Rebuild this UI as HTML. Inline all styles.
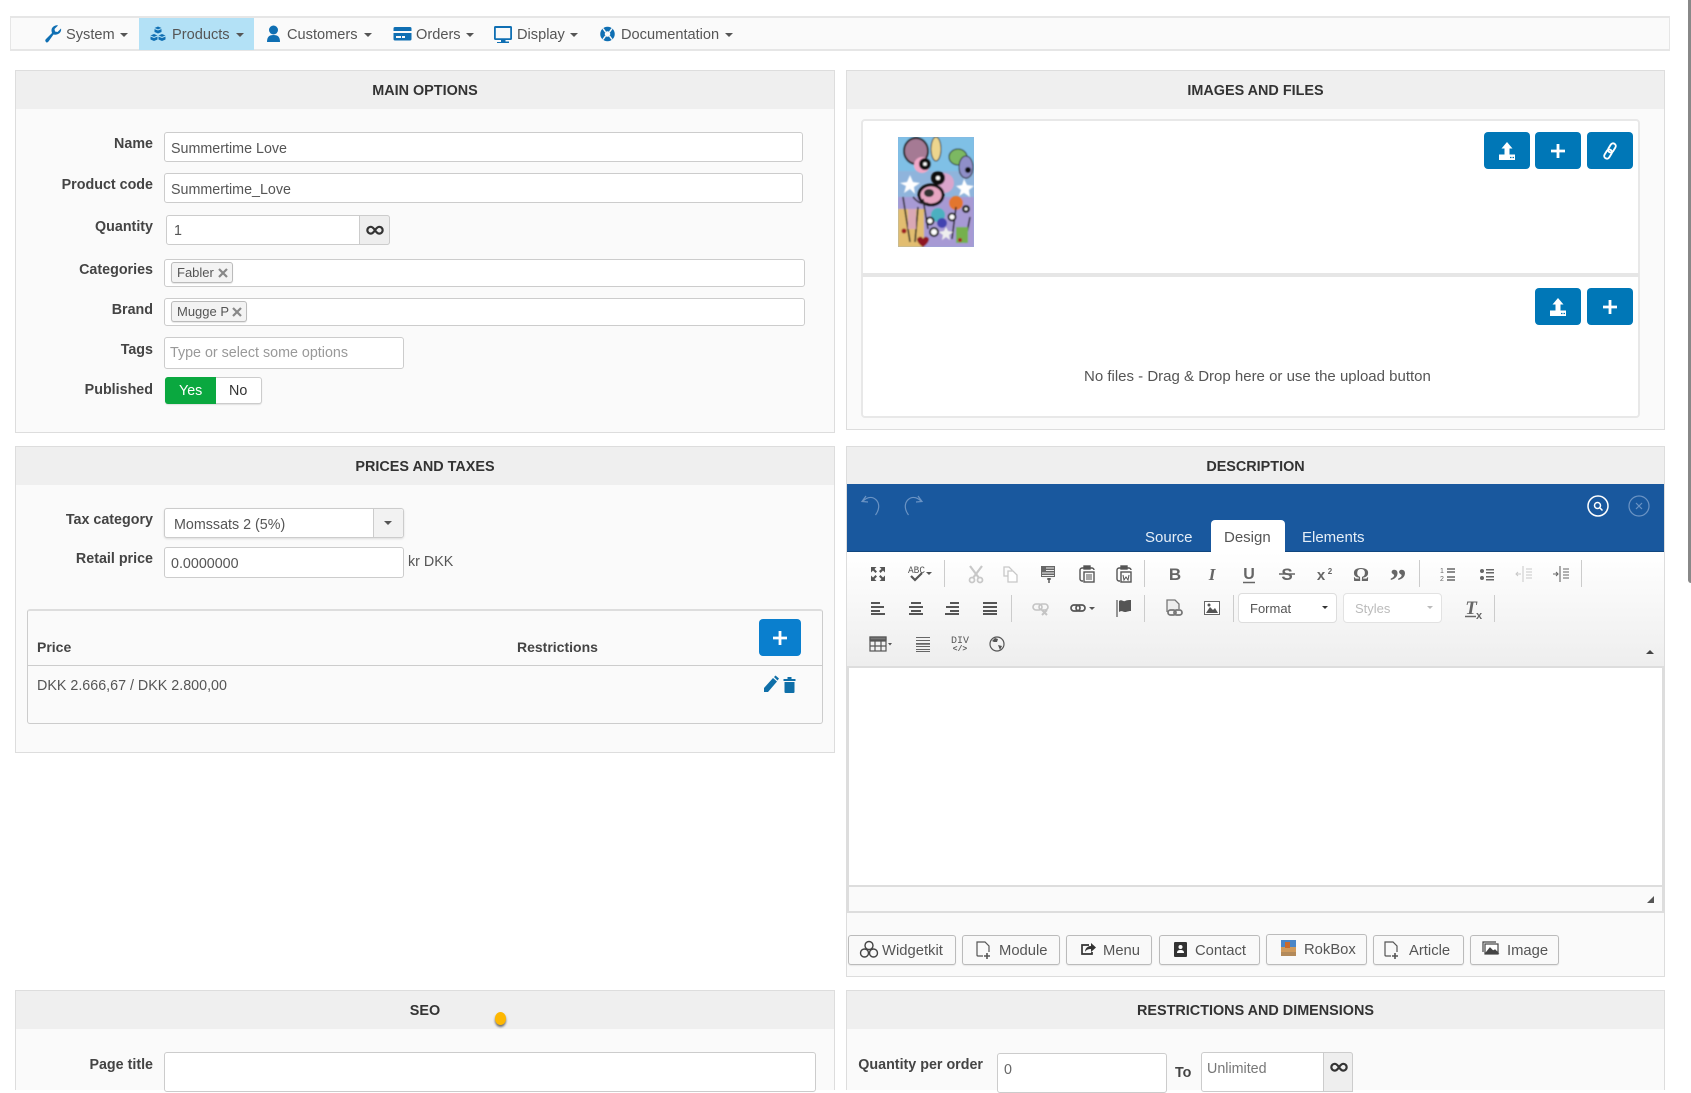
<!DOCTYPE html>
<html lang="en"><head><meta charset="utf-8"><title>Product edit</title>
<style>
html,body{margin:0;padding:0;background:#fff}
body{width:1691px;height:1080px;overflow:hidden;position:relative;font-family:"Liberation Sans",sans-serif;font-size:14.3px;color:#555}
.a,.t,.l,.i,.b,.p,.h{position:absolute;box-sizing:border-box}
.t{white-space:nowrap;line-height:20px;height:20px}
.n{font-size:14.6px}
.w{font-size:15px}
.l{white-space:nowrap;line-height:20px;height:20px;font-weight:bold;font-size:14.3px;color:#444;text-align:right;left:20px;width:133px}
.i{background:#fff;border:1px solid #ccc;border-radius:3px}
.p{background:#fafafa;border:1px solid #ddd}
.h{left:0;right:0;top:0;height:38px;background:#efefef;text-align:center;font-weight:bold;color:#333;line-height:40px;font-size:14.4px}
.b{background:#0077b7;border-radius:4px}
.b svg{position:absolute;left:0;top:0}
.c{position:absolute;box-sizing:border-box;background:#f3f3f3;border:1px solid #bbb;border-radius:3px;height:21px;font-size:13px;color:#555;line-height:19px;padding-left:5px;white-space:nowrap;box-shadow:0 1px 1px rgba(0,0,0,.1)}
.e{position:absolute;box-sizing:border-box;top:935px;height:30px;background:#f9f9f9;border:1px solid #bbb;border-radius:3px;color:#555;font-size:14.8px;line-height:30px;white-space:nowrap;box-shadow:0 1px 1px rgba(0,0,0,.08)}
.e span{position:absolute;top:0}
.e svg{position:absolute;left:0;top:0}
.ca{position:absolute;width:0;height:0;border-left:4px solid transparent;border-right:4px solid transparent;border-top:4px solid #555}
</style></head><body>

<!-- navbar -->
<div class="a" style="left:10px;top:16px;width:1660px;height:35px;background:#fafafa;border:2px solid #e6e6e6;border-left-width:1px;border-right-width:1px"></div>
<div class="a" style="left:139px;top:18px;width:115px;height:32px;background:#b3e1f6"></div>
<div class="t n" style="left:66px;top:25px">System</div><div class="ca" style="left:120px;top:33px"></div>
<div class="t n" style="left:172px;top:25px">Products</div><div class="ca" style="left:236px;top:33px"></div>
<div class="t n" style="left:287px;top:25px">Customers</div><div class="ca" style="left:364px;top:33px"></div>
<div class="t n" style="left:416px;top:25px">Orders</div><div class="ca" style="left:466px;top:33px"></div>
<div class="t n" style="left:517px;top:25px">Display</div><div class="ca" style="left:570px;top:33px"></div>
<div class="t n" style="left:621px;top:25px">Documentation</div><div class="ca" style="left:725px;top:33px"></div>
<svg class="a" style="left:0;top:0" width="760" height="52" fill="#0f6fb3">
 <path d="M46 42c-1-1-1-2 0-3l6-6c-1-3-.5-5 1.500-6.500 1.500-1 3-1.500 4.500-1l-3.500 3.500.5 2.500 2.500.5L61 28.500c.5 2-.5 4-2 5-1.500 1-3.500 1.500-5.500 1l-5 7c-1 1-2 1.500-2.500.5z"/>
 <path d="M158 26.500l3.500 1.500v4l-3.500 1.500-3.500-1.500v-4zM154 34l3.500 1.500v4L154 41l-3.500-1.500v-4zM162 34l3.500 1.500v4L162 41l-3.500-1.500v-4z"/>
 <path d="M154.500 28.500l3.500 1.500 3.500-1.500M150.500 36l3.500 1.500 3.500-1.500M158.500 36l3.500 1.500 3.500-1.500" stroke="#b3e1f6" stroke-width="1" fill="none"/>
 <circle cx="273.500" cy="30" r="4.500"/><path d="M267 42c0-5 2-7 6.500-7s6.500 2 6.500 7z"/>
 <path d="M393.500 28.500c0-1 .5-1.500 1.500-1.500h15c1 0 1.500.5 1.500 1.500V31h-18zM393.500 33h18v6c0 1-.5 1.500-1.500 1.500h-15c-1 0-1.500-.5-1.500-1.500zM396 36v2h5v-2zM402 36v2h3v-2z" fill-rule="evenodd"/>
 <path fill-rule="evenodd" d="M494 27.500c0-1 .5-1.500 1.500-1.500h15c1 0 1.500.5 1.500 1.500v11c0 1-.5 1.500-1.500 1.500h-5v1.500h3.500v1.500h-12V42H501v-2h-5.500c-1 0-1.500-.5-1.500-1.500zM495.800 28v10.200h14.400V28z"/>
 <circle cx="607.500" cy="34" r="5" fill="none" stroke="#0f6fb3" stroke-width="4.500"/><path d="M603 28.500l2.500 3.500M612 28.500l-2.500 3.500M603 39.500l2.500-3.500M612 39.500l-2.500-3.500" stroke="#fafafa" stroke-width="1.500"/>
</svg>

<!-- MAIN OPTIONS -->
<div class="p" style="left:15px;top:70px;width:820px;height:363px"><div class="h">MAIN OPTIONS</div></div>
<div class="l" style="top:134px">Name</div>
<div class="i" style="left:164px;top:132px;width:639px;height:30px"></div><div class="t" style="left:171px;top:138.500px">Summertime Love</div>
<div class="l" style="top:175px">Product code</div>
<div class="i" style="left:164px;top:173px;width:639px;height:30px"></div><div class="t" style="left:171px;top:180px">Summertime_Love</div>
<div class="l" style="top:217px">Quantity</div>
<div class="i" style="left:166px;top:215px;width:224px;height:30px"></div><div class="a" style="left:359px;top:215px;width:31px;height:30px;background:#eee;border:1px solid #ccc;border-radius:0 3px 3px 0"></div><div class="t" style="left:174px;top:221px">1</div>
<svg class="a" style="left:365px;top:222px" width="20" height="16" fill="none" stroke="#333" stroke-width="2.600"><path d="M10 8c-2-3-3.500-4-5-4a4 4 0 0 0 0 8c1.500 0 3-1 5-4s3.500-4 5-4a4 4 0 0 1 0 8c-1.500 0-3-1-5-4z" transform="translate(1.500 1.400) scale(.85)"/></svg>
<div class="l" style="top:260px">Categories</div>
<div class="i" style="left:164px;top:259px;width:641px;height:28px"></div>
<div class="c" style="left:171px;top:262px;width:62px">Fabler</div><svg class="a" style="left:217px;top:267px" width="12" height="12" stroke="#888" stroke-width="2.200"><path d="M2 2l8 8M10 2l-8 8"/></svg>
<div class="l" style="top:299.500px">Brand</div>
<div class="i" style="left:164px;top:298px;width:641px;height:28px"></div>
<div class="c" style="left:171px;top:301px;width:76px">Mugge P</div><svg class="a" style="left:231px;top:306px" width="12" height="12" stroke="#888" stroke-width="2.200"><path d="M2 2l8 8M10 2l-8 8"/></svg>
<div class="l" style="top:339.500px">Tags</div>
<div class="i" style="left:164px;top:337px;width:240px;height:32px"></div><div class="t" style="left:170px;top:343px;color:#999">Type or select some options</div>
<div class="l" style="top:379.500px">Published</div>
<div class="a" style="left:165px;top:377px;width:97px;height:27px;background:#fff;border:1px solid #ccc;border-radius:3px;box-shadow:0 1px 1px rgba(0,0,0,.1)"></div>
<div class="a" style="left:165px;top:377px;width:51px;height:27px;background:#0aa83f;border-radius:3px 0 0 3px"></div>
<div class="t" style="left:179px;top:381px;color:#fff">Yes</div><div class="t" style="left:229px;top:381px;color:#333">No</div>

<!-- IMAGES AND FILES -->
<div class="p" style="left:846px;top:70px;width:819px;height:360px"><div class="h">IMAGES AND FILES</div></div>
<div class="a" style="left:861px;top:119px;width:779px;height:299px;background:#fff;border:2px solid #e8e8e8;border-radius:4px"></div>
<div class="a" style="left:862px;top:273px;width:777px;height:4px;background:#e6e6e6"></div>
<svg class="a" style="left:898px;top:137px" width="76" height="110" viewBox="0 0 76 110"><defs><filter id="bl"><feGaussianBlur stdDeviation=".7"/></filter></defs>
 <rect width="76" height="110" fill="#8fb4dc"/>
 <g filter="url(#bl)">
 <rect width="76" height="34" fill="#7fc0e6"/><rect y="60" width="76" height="50" fill="#a79ad4"/><rect x="0" y="72" width="26" height="38" fill="#e2bd6f"/>
 <ellipse cx="18" cy="14" rx="12" ry="13" fill="#a57a94" stroke="#222" stroke-width="2"/><ellipse cx="38" cy="12" rx="5" ry="12" fill="#ecd58e" stroke="#333"/><ellipse cx="60" cy="20" rx="9" ry="8" fill="#7cb862" stroke="#222"/><ellipse cx="68" cy="30" rx="7" ry="11" fill="#8f8fc8" stroke="#222"/>
 <circle cx="24" cy="28" r="8" fill="#f0a8c8"/><circle cx="46" cy="46" r="10" fill="#d9a5cc"/>
 <circle cx="27" cy="27" r="6" fill="#111"/><circle cx="27" cy="27" r="1.800" fill="#fff"/><circle cx="40" cy="41" r="7" fill="#111"/><circle cx="40" cy="41" r="2" fill="#fff"/><circle cx="70" cy="33" r="3" fill="#111"/>
 <path d="M12 38l3 7 7 1-6 4 1 7-5-5-6 4 2-7-6-3 7-1z" fill="#fff"/><path d="M66 42l3 6 7 1-5 4 1 7-6-4-5 3 2-6-5-4 6-1z" fill="#fff"/>
 <ellipse cx="33" cy="58" rx="12" ry="10" fill="#e7a5c1" stroke="#111" stroke-width="3"/><ellipse cx="31" cy="56" rx="5" ry="4" fill="#333"/>
 <circle cx="58" cy="66" r="7" fill="#e2762d"/><circle cx="68" cy="72" r="4" fill="#222"/><circle cx="68" cy="72" r="1.500" fill="#eee"/>
 <path d="M5 60L12 105M20 70l-3 35M25 62l5 30M58 70l-4 32M72 80l-5 26M15 60c5 6 10 8 15 6" stroke="#222" stroke-width="1.600" fill="none"/>
 <circle cx="40" cy="78" r="7" fill="#4bb0c0"/><circle cx="44" cy="86" r="5" fill="#4242b0"/><circle cx="32" cy="84" r="3.500" fill="#fff" stroke="#111" stroke-width="2"/><circle cx="54" cy="80" r="3.500" fill="#fff" stroke="#111" stroke-width="2"/><circle cx="36" cy="95" r="4" fill="#fff" stroke="#111" stroke-width="2"/><path d="M48 90l2 4 5 1-4 3 1 5-4-3-4 3 1-5-4-3 5-1z" fill="#eee"/>
 <path d="M19 102c2-3 5-3 6 0 1-3 5-3 6 0 0 3-3 6-6 8-3-2-6-5-6-8z" fill="#8f1520"/>
 <rect x="10" y="72" width="8" height="20" fill="#d9a8b5"/><rect x="58" y="90" width="12" height="16" fill="#74b04e"/>
 <circle cx="6" cy="94" r="2.500" fill="#a01a20"/><circle cx="62" cy="103" r="2" fill="#a01a20"/>
 </g></svg>
<div class="t w" style="left:1084px;top:366.500px">No files - Drag &amp; Drop here or use the upload button</div>
<div class="b" style="left:1484px;top:132px;width:46px;height:37px"><svg width="46" height="37" fill="#fff"><path d="M23 10l5.500 6.500H25.500V23h-5v-6.500h-3zM15 22.500h16V28H15z"/><path d="M26 25.500h1.500M28.500 25.500H30" stroke="#0077b7" stroke-width="1.200"/></svg></div>
<div class="b" style="left:1535px;top:132px;width:46px;height:37px"><svg width="46" height="37" stroke="#fff" stroke-width="2.800"><path d="M16 19h14M23 12v14"/></svg></div>
<div class="b" style="left:1587px;top:132px;width:46px;height:37px"><svg width="46" height="37" fill="none" stroke="#fff" stroke-width="2.200"><g transform="translate(23 19) rotate(-58) scale(.85)"><rect x="-10" y="-3.200" width="11.500" height="6.400" rx="3.200"/><rect x="-1.500" y="-3.200" width="11.500" height="6.400" rx="3.200"/></g></svg></div>
<div class="b" style="left:1535px;top:288px;width:46px;height:37px"><svg width="46" height="37" fill="#fff"><path d="M23 10l5.500 6.500H25.500V23h-5v-6.500h-3zM15 22.500h16V28H15z"/><path d="M26 25.500h1.500M28.500 25.500H30" stroke="#0077b7" stroke-width="1.200"/></svg></div>
<div class="b" style="left:1587px;top:288px;width:46px;height:37px"><svg width="46" height="37" stroke="#fff" stroke-width="2.800"><path d="M16 19h14M23 12v14"/></svg></div>

<!-- PRICES AND TAXES -->
<div class="p" style="left:15px;top:446px;width:820px;height:307px"><div class="h">PRICES AND TAXES</div></div>
<div class="l" style="top:510px">Tax category</div>
<div class="i" style="left:164px;top:508px;width:240px;height:30px;box-shadow:0 1px 2px rgba(0,0,0,.12)"></div>
<div class="a" style="left:373px;top:509px;width:30px;height:28px;background:#f2f2f2;border-left:1px solid #ccc;border-radius:0 3px 3px 0"></div>
<div class="ca" style="left:384px;top:521px"></div>
<div class="t" style="left:174px;top:514.500px">Momssats 2 (5%)</div>
<div class="l" style="top:549px">Retail price</div>
<div class="i" style="left:164px;top:547px;width:240px;height:31px"></div><div class="t" style="left:171px;top:554px">0.0000000</div>
<div class="t" style="left:408px;top:552px">kr DKK</div>
<div class="a" style="left:27px;top:609px;width:796px;height:115px;border:1px solid #ccc;border-top:2px solid #ddd;border-radius:3px"></div>
<div class="a" style="left:28px;top:665px;width:794px;height:1px;background:#ccc"></div>
<div class="t" style="left:37px;top:637px;font-weight:bold;color:#444;font-size:14px">Price</div>
<div class="t" style="left:517px;top:637px;font-weight:bold;color:#444;font-size:14px">Restrictions</div>
<div class="a" style="left:759px;top:619px;width:42px;height:37px;background:#0a7fce;border-radius:4px"><svg width="42" height="37" stroke="#fff" stroke-width="2.800"><path d="M14 19h14M21 12v14"/></svg></div>
<div class="t" style="left:37px;top:675px;padding-top:1px">DKK 2.666,67 / DKK 2.800,00</div>
<svg class="a" style="left:760px;top:673px" width="40" height="22" fill="#0f6fa8"><path d="M4 19v-4l9-10 4 3.500-9 10.500zM14 4l1.500-1.500 3.500 3-1.500 2z"/><path d="M24 6h12v2H24zM28 4h4v2h-4zM25 9h10v10c0 .5-.5 1-1 1h-8c-.5 0-1-.5-1-1z" transform="translate(-.500 0)"/></svg>

<!-- DESCRIPTION -->
<div class="p" style="left:846px;top:446px;width:819px;height:531px"><div class="h">DESCRIPTION</div></div>
<div class="a" style="left:847px;top:484px;width:817px;height:68px;background:#19589e;border-bottom:1px solid #10467f"></div>
<div class="a" style="left:1211px;top:520px;width:74px;height:33px;background:#fff;border-radius:4px 4px 0 0"></div>
<div class="t w" style="left:1145px;top:527.500px;color:#e5eef7">Source</div>
<div class="t w" style="left:1224px;top:527.500px;color:#555">Design</div>
<div class="t w" style="left:1302px;top:527.500px;color:#e5eef7">Elements</div>
<svg class="a" style="left:847px;top:484px" width="817" height="68" fill="none" stroke="#6a93c4" stroke-width="1.200">
 <path d="M19 12l-4 5.500 6 .500M15.500 17.500c3-3 7-5 11-3.500 6 3 7 10 2 17"/><path d="M19 12l-4 5.500 6 .500M15.500 17.500c3-3 7-5 11-3.500 6 3 7 10 2 17" transform="translate(90 0) scale(-1 1)"/>
 <circle cx="751" cy="22" r="10" stroke="#fff" stroke-width="1.500"/><circle cx="750.500" cy="21.500" r="3" stroke="#fff" stroke-width="1.500"/><path d="M753 24l2.500 2.500" stroke="#fff" stroke-width="1.500"/>
 <circle cx="792" cy="22" r="10"/><path d="M789 19l6 6M795 19l-6 6"/>
</svg>
<div class="a" style="left:847px;top:552px;width:817px;height:114px;background:linear-gradient(#fff,#eeeeee)"></div>
<div class="a" style="left:847px;top:666px;width:817px;height:219px;background:#fff;border-top:2px solid #ddd;border-left:2px solid #ddd;border-right:2px solid #ddd"></div>
<div class="a" style="left:847px;top:885px;width:817px;height:28px;background:#fafafa;border:2px solid #ddd"></div>
<svg class="a" style="left:1644px;top:893px" width="12" height="12" fill="#555"><path d="M10 3v7H3z"/></svg>

<!-- toolbar icons -->
<svg class="a" style="left:0;top:540px" width="1691" height="130" font-family="Liberation Sans,sans-serif">
 <!-- separators -->
 <g stroke="#ccc" stroke-width="1"><path d="M944.500 20v27M1144.500 20v27M1419.500 20v27M1581.500 20v27M1011.500 55v27M1144.500 55v27M1233.500 55v27M1494.500 55v27"/></g>
 <g transform="translate(0 34)">
  <!-- fullscreen -->
  <g transform="translate(878 0)" fill="#555"><path d="M-7-7h5.500l-2 2 2.500 2.500-1.500 1.500L-5-3.500l-2 2zM7-7v5.500l-2-2-2.500 2.500L1-3l2.500-2-2-2zM-7 7v-5.500l2 2L-2.500 1-1 2.500-3.500 5l2 2zM7 7H1.500l2-2L1 2.500 2.500 1 5 3.500l2-2z"/></g>
  <!-- spell -->
  <g transform="translate(918 0)"><text x="-10" y="-1" font-size="10" fill="#555" font-family="Liberation Mono" textLength="17" lengthAdjust="spacingAndGlyphs">ABC</text><path d="M-7 2l4 4 7-7" fill="none" stroke="#555" stroke-width="2.200"/><path d="M8-2h6l-3 3z" fill="#555"/></g>
  <!-- cut -->
  <g transform="translate(976 0)" fill="none" stroke="#c8c8c8" stroke-width="1.800"><circle cx="-4" cy="6" r="2.500"/><circle cx="4" cy="6" r="2.500"/><path d="M-6-8L3 4M6-8L-3 4" stroke-width="2.200"/></g>
  <!-- copy -->
  <g transform="translate(1011 0)" fill="none" stroke="#c8c8c8" stroke-width="1.300"><path d="M-7-7h5l3 3v6h-8z"/><path d="M-3-3h5l4 4v7h-9z" fill="#fff"/></g>
  <!-- paste text -->
  <g transform="translate(1048 0)"><rect x="-7" y="-8" width="14" height="11" fill="#666"/><path d="M-2-6H6M-2-3.500H6M-6-1H6M-6 1.500H6M-6 4H6" stroke="#eee" stroke-width="1" fill="none"/><path d="M-1 5h4M1 4v5" stroke="#444" stroke-width="1.300"/></g>
  <!-- paste -->
  <g transform="translate(1087 0)" fill="none" stroke="#555" stroke-width="1.400"><path d="M-3-6h-2c-1 0-2 1-2 2V5c0 1 1 2 2 2h1"/><path d="M3-6h2c1 0 2 1 2 2"/><rect x="-3" y="-8" width="6" height="3" fill="#555"/><rect x="-3" y="-2" width="10" height="10"/><path d="M-1 1h6M-1 3h6M-1 5h6" stroke-width="1"/></g>
  <g transform="translate(1124 0)" fill="none" stroke="#555" stroke-width="1.400"><path d="M-3-6h-2c-1 0-2 1-2 2V5c0 1 1 2 2 2h1"/><path d="M3-6h2c1 0 2 1 2 2"/><rect x="-3" y="-8" width="6" height="3" fill="#555"/><rect x="-3" y="-2" width="10" height="10"/><path d="M-1 1l1 5 2-3 2 3 1-5" stroke-width="1"/></g>
  <text x="1175" y="6" font-size="17" font-weight="bold" fill="#666" text-anchor="middle">B</text>
  <text x="1212" y="6" font-size="17" font-weight="bold" font-style="italic" fill="#666" text-anchor="middle" font-family="Liberation Serif">I</text>
  <text x="1249" y="5" font-size="16" font-weight="bold" fill="#666" text-anchor="middle">U</text><path d="M1243 8.500h12" stroke="#666" stroke-width="1.500"/>
  <text x="1287" y="6" font-size="17" font-weight="bold" fill="#666" text-anchor="middle">S</text><path d="M1279 0h16" stroke="#666" stroke-width="1.500"/>
  <text x="1321" y="6" font-size="15" font-weight="bold" fill="#666" text-anchor="middle">x</text><text x="1330" y="0" font-size="8" font-weight="bold" fill="#666" text-anchor="middle">2</text>
  <text x="1361" y="7" font-size="20" font-weight="bold" fill="#666" text-anchor="middle" font-family="Liberation Serif">Ω</text>
  <text x="1398" y="18" font-size="34" font-weight="bold" fill="#666" text-anchor="middle" font-family="Liberation Serif">”</text>
  <!-- ol -->
  <g transform="translate(1448 0)" fill="none" stroke="#666" stroke-width="1.500"><path d="M-1-5H7M-1-2H7M-1 3H7M-1 6H7"/><text x="-8" y="-1" font-size="7" fill="#666" stroke="none">1</text><text x="-8" y="7" font-size="7" fill="#666" stroke="none">2</text></g>
  <g transform="translate(1487 0)" fill="#666"><circle cx="-5" cy="-3" r="2"/><circle cx="-5" cy="4" r="2"/><path d="M-1-5H7v1.500H-1zM-1-2H7v1.500H-1zM-1 2H7v1.500H-1zM-1 5H7v1.500H-1z"/></g>
  <g transform="translate(1524 0)" stroke="#c8c8c8" stroke-width="1" fill="none"><path d="M-1-8V8M2-5H8M2-2H8M2 1H8M2 4H8M-3 0H-8M-6-2l-2 2 2 2"/></g>
  <g transform="translate(1561 0)" stroke="#666" stroke-width="1.100" fill="none"><path d="M-1-8V8M2-5H8M2-2H8M2 1H8M2 4H8M-8 0H-3M-5-2l2 2-2 2"/></g>
 </g>
 <g transform="translate(0 68)">
  <g fill="#555"><path d="M871-6h9v2h-9zM871-2h13v2h-13zM871 2h9v2h-9zM871 5h14v2h-14z"/><path d="M911-6h10v2h-10zM909-2h14v2h-14zM911 2h10v2h-10zM909 5h14v2h-14z"/><path d="M950-6h9v2h-9zM946-2h13v2h-13zM950 2h9v2h-9zM945 5h14v2h-14z"/><path d="M983-6h14v2h-14zM983-2h14v2h-14zM983 2h14v2h-14zM983 5h14v2h-14z"/></g>
  <!-- unlink -->
  <g transform="translate(1041 0)" fill="none" stroke="#c4c4c4" stroke-width="1.600"><rect x="-8" y="-4" width="9" height="6" rx="3"/><rect x="-2" y="-4" width="9" height="6" rx="3"/><path d="M1 2l5 5M6 2l-5 5" stroke-width="2"/></g>
  <!-- link -->
  <g transform="translate(1078 0)" fill="none" stroke="#555" stroke-width="1.700"><rect x="-7" y="-3" width="9" height="6" rx="3"/><rect x="-2" y="-3" width="9" height="6" rx="3"/></g><path d="M1089-1h6l-3 3z" fill="#555"/>
  <!-- flag -->
  <g transform="translate(1124 0)"><path d="M-7-8V9" stroke="#555" stroke-width="1.200"/><path d="M-5-7c3-2 4 1 6 0s4-1 6-1V3c-3 0-4 1-6 1s-3-2-6 0z" fill="#555"/></g>
  <!-- doc link -->
  <g transform="translate(1174 0)" fill="none" stroke="#777" stroke-width="1.300"><path d="M-7 4V-8h8l4 4V1" fill="#eee"/><rect x="-6" y="2" width="8" height="5" rx="2.500" stroke-width="1.800"/><rect x="0" y="2" width="8" height="5" rx="2.500" stroke-width="1.800"/></g>
  <!-- image -->
  <g transform="translate(1212 0)"><rect x="-7.500" y="-6.500" width="15" height="13" fill="#fff" stroke="#666"/><path d="M-6 5l4-6 3 3 2-2 3 5z" fill="#555"/><circle cx="-3" cy="-3" r="1.500" fill="#555"/></g>
  <!-- Tx -->
  <text x="1471" y="6" font-size="19" font-style="italic" font-weight="bold" fill="#666" text-anchor="middle" font-family="Liberation Serif">T</text><path d="M1465 8.500h11" stroke="#666" stroke-width="1.500"/><text x="1476" y="11" font-size="11" font-weight="bold" fill="#666">x</text>
 </g>
 <g transform="translate(0 104)">
  <g transform="translate(878 0)" fill="none" stroke="#555" stroke-width="1.200"><rect x="-8" y="-7" width="16" height="14"/><path d="M-8-3H8M-8 2H8M-3-7V7M3-7V7"/><rect x="-8" y="-7" width="16" height="3" fill="#777"/></g><path d="M888-1h4l-2 2.500z" fill="#555"/>
  <g fill="#666"><path d="M916-7h14v1h-14zM916-4h14v1h-14zM916-1h14v1.800h-14zM916 2h14v1h-14zM916 5h14v1h-14zM916 7h14v1h-14z"/></g>
  <text x="960" y="-1" font-size="10" fill="#555" text-anchor="middle" font-family="Liberation Mono">DIV</text><text x="960" y="7" font-size="8" fill="#555" text-anchor="middle" font-family="Liberation Mono" font-weight="bold">&lt;/&gt;</text>
  <g transform="translate(997 0)"><circle r="7" fill="none" stroke="#555" stroke-width="1.200"/><path d="M-5-3l3-3 3 1-1 3-3 0zM1 1l4 1-2 4z" fill="#555"/></g>
 </g>
</svg>
<svg class="a" style="left:1644px;top:648px" width="12" height="10" fill="#444"><path d="M6 1l4 4H2z" transform="translate(0 1)"/></svg>

<!-- Format/Styles -->
<div class="a" style="left:1238px;top:593px;width:99px;height:30px;background:#fff;border:1px solid #ddd;border-radius:4px"></div>
<div class="t" style="left:1250px;top:598.500px;font-size:13px">Format</div>
<div class="ca" style="left:1322px;top:606px;border-width:3px;border-left-color:transparent;border-right-color:transparent;border-top-color:#333"></div>
<div class="a" style="left:1343px;top:593px;width:99px;height:30px;background:#fff;border:1px solid #e2e2e2;border-radius:4px"></div>
<div class="t" style="left:1355px;top:598.500px;font-size:13px;color:#bbb">Styles</div>
<div class="ca" style="left:1427px;top:606px;border-width:3px;border-left-color:transparent;border-right-color:transparent;border-top-color:#bbb"></div>

<!-- extension buttons -->
<div class="e" style="left:848px;width:108px"><svg width="30" height="30" fill="none" stroke="#444" stroke-width="1.400"><circle cx="20" cy="9.500" r="4"/><circle cx="15.500" cy="17" r="4"/><circle cx="24.500" cy="17" r="4"/></svg><span style="left:33px">Widgetkit</span></div>
<div class="e" style="left:962px;width:98px"><svg width="40" height="30" fill="none" stroke="#555" stroke-width="1.200"><path d="M20 20h-5a1 1 0 0 1-1-1V6h8l4 4v6"/><path d="M24 17v6M21 20h6" stroke-width="1.600"/></svg><span style="left:36px">Module</span></div>
<div class="e" style="left:1066px;width:86px"><svg width="36" height="30"><g transform="translate(0 -2)"><path d="M24 12v-3l5 4.500-5 4.500v-3c-3 0-5 1-6 3 0-3 2-6 6-6z" fill="#333"/><path d="M22 11h-7v9h10v-2" fill="none" stroke="#333" stroke-width="1.700"/></g></svg><span style="left:36px">Menu</span></div>
<div class="e" style="left:1159px;width:101px"><svg width="36" height="30"><g transform="translate(0 -2)"><path d="M15 8h11c.5 0 1 .5 1 1v13c0 .5-.5 1-1 1H15c-.5 0-1-.5-1-1V9c0-.5.5-1 1-1z" fill="#333"/><circle cx="20.500" cy="13" r="2" fill="#fff"/><path d="M17 19c0-2 1-3 3.500-3s3.500 1 3.500 3z" fill="#fff"/></g></svg><span style="left:35px">Contact</span></div>
<div class="e" style="left:1266px;width:101px;top:934px;height:31px"><svg width="36" height="30"><rect x="14" y="5" width="15" height="9" fill="#4a86c8"/><rect x="14" y="12" width="15" height="8" fill="#cf9a5c"/><rect x="18" y="7" width="5" height="6" fill="#c96a2d"/><rect x="14" y="17" width="15" height="4" fill="#b38a5a"/></svg><span style="left:37px">RokBox</span></div>
<div class="e" style="left:1373px;width:91px"><svg width="34" height="30" fill="none" stroke="#555" stroke-width="1.200"><path d="M17 20h-5a1 1 0 0 1-1-1V6h8l4 4v6"/><path d="M21 17v6M18 20h6" stroke-width="1.600"/></svg><span style="left:35px">Article</span></div>
<div class="e" style="left:1470px;width:89px"><svg width="32" height="30" fill="none" stroke="#444" stroke-width="1.200"><g transform="translate(0 -2)"><rect x="14" y="10" width="13" height="10" fill="#fff"/><path d="M12 18V8h13"/><path d="M15 19l4-5 3 3 2-1 3 3z" fill="#444"/></g></svg><span style="left:36px">Image</span></div>

<!-- SEO -->
<div class="p" style="left:15px;top:990px;width:820px;height:100px;border-bottom:0"><div class="h">SEO</div></div>
<div class="a" style="left:495px;top:1012px;width:11px;height:13px;background:#fdb702;border-radius:50%;box-shadow:0 2px 2px rgba(0,0,0,.55)"></div>
<div class="l" style="top:1055px">Page title</div>
<div class="i" style="left:164px;top:1052px;width:652px;height:40px"></div>

<!-- RESTRICTIONS -->
<div class="p" style="left:846px;top:990px;width:819px;height:100px;border-bottom:0"><div class="h">RESTRICTIONS AND DIMENSIONS</div></div>
<div class="l" style="top:1055px;left:850px;width:133px">Quantity per order</div>
<div class="i" style="left:997px;top:1053px;width:170px;height:40px"></div><div class="t" style="left:1004px;top:1059.500px;color:#666">0</div>
<div class="t" style="left:1175px;top:1063px;font-weight:bold;color:#444">To</div>
<div class="i" style="left:1201px;top:1052px;width:152px;height:40px"></div><div class="a" style="left:1323px;top:1052px;width:30px;height:40px;background:#eee;border:1px solid #ccc;border-radius:0 3px 0 0"></div>
<div class="t" style="left:1207px;top:1058.500px;color:#777">Unlimited</div>
<svg class="a" style="left:1329px;top:1059px" width="20" height="16" fill="none" stroke="#333" stroke-width="2.600"><path d="M10 8c-2-3-3.500-4-5-4a4 4 0 0 0 0 8c1.500 0 3-1 5-4s3.500-4 5-4a4 4 0 0 1 0 8c-1.500 0-3-1-5-4z" transform="translate(1.500 1.400) scale(.85)"/></svg>

<!-- scrollbar -->
<div class="a" style="left:1688px;top:0;width:3px;height:583px;background:#888;border-radius:0 0 0 3px"></div>
</body></html>
